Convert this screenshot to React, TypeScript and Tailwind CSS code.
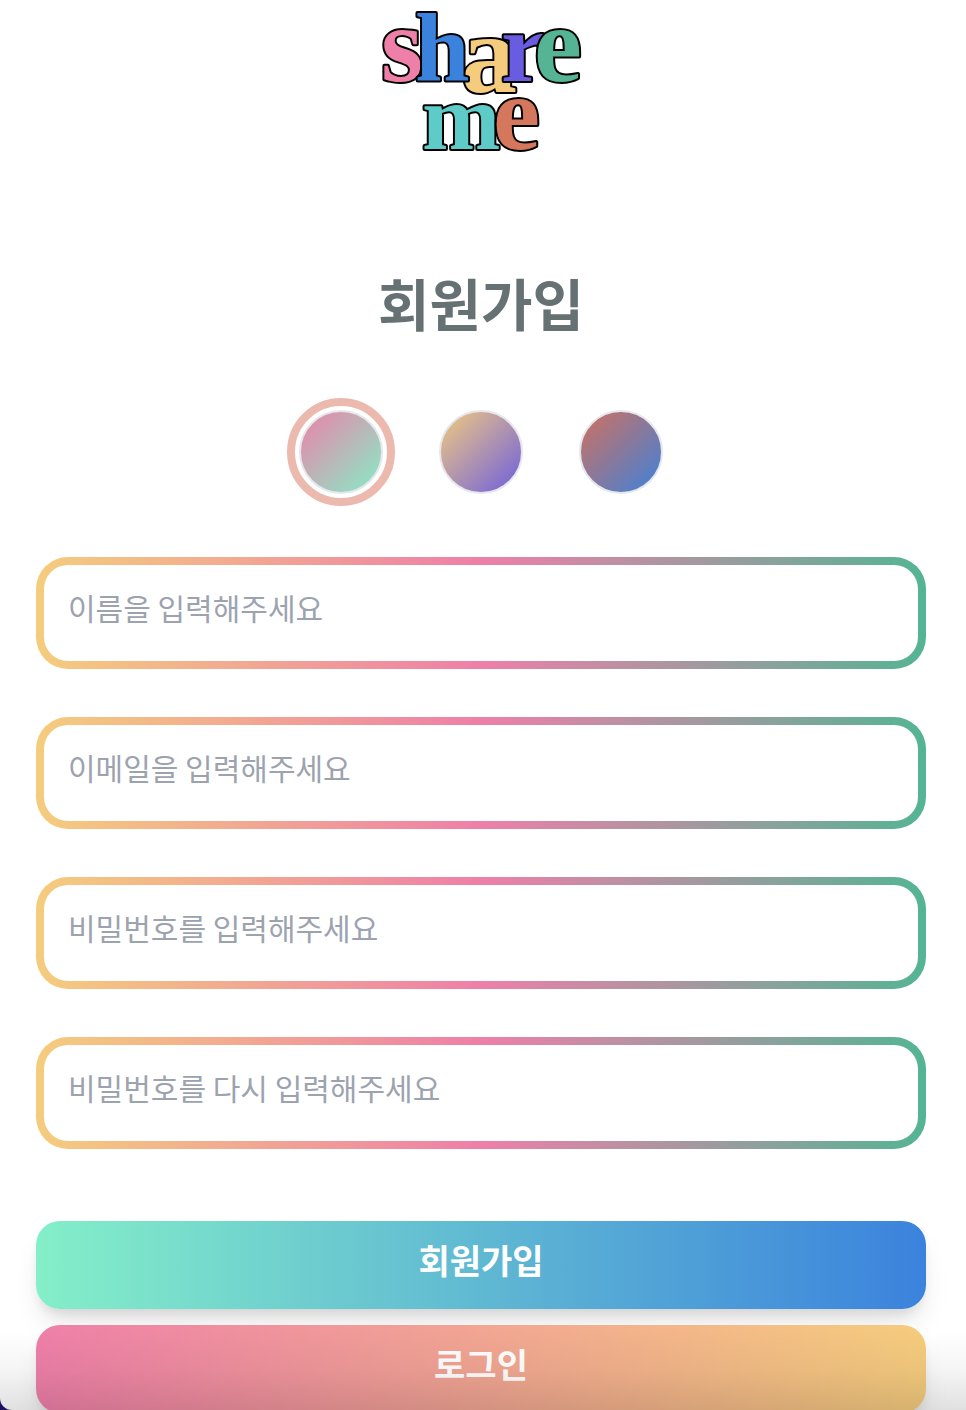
import { useState } from "react";

const letters = [
  { char: "s", x: 0, y: 69, size: 108, color: "#ee7fa8" },
  { char: "a", x: 80, y: 80, size: 112, color: "#f5cc7d" },
  { char: "h", x: 34, y: 69, size: 98, color: "#3b82dd" },
  { char: "r", x: 120, y: 69, size: 100, color: "#6a5ce0" },
  { char: "e", x: 153, y: 69, size: 108, color: "#54b494" },
  { char: "m", x: 41, y: 137, size: 94, color: "#5ecbc8" },
  { char: "e", x: 112, y: 137, size: 106, color: "#d4775c" },
];

function Logo() {
  return (
    <svg
      viewBox="0 0 200 144"
      className="block h-[144px] w-[200px] overflow-visible font-['Liberation_Serif',serif] font-bold"
      role="img"
      aria-label="share me"
    >
      {letters.map((l, i) => (
        <text
          key={i}
          x={l.x}
          y={l.y}
          fontSize={l.size}
          fill={l.color}
          stroke="black"
          strokeWidth={4}
          strokeLinejoin="round"
          paintOrder="stroke"
        >
          {l.char}
        </text>
      ))}
    </svg>
  );
}

const themes = [
  { id: "mint", label: "핑크 민트", fill: "bg-[linear-gradient(135deg,#ee7fa8,#84efc8)]" },
  { id: "violet", label: "옐로 바이올렛", fill: "bg-[linear-gradient(135deg,#f5cc7d,#6a5ce0)]" },
  { id: "blue", label: "레드 블루", fill: "bg-[linear-gradient(135deg,#d4705c,#3b82dd)]" },
];

const fields = [
  { id: "name", type: "text", hint: "이름을 입력해주세요" },
  { id: "email", type: "email", hint: "이메일을 입력해주세요" },
  { id: "password", type: "password", hint: "비밀번호를 입력해주세요" },
  { id: "confirm", type: "password", hint: "비밀번호를 다시 입력해주세요" },
];

const buttonBase =
  "h-[88px] w-full shrink-0 rounded-3xl pb-3 text-[34px] font-bold text-white shadow-[0_20px_30px_-6px_rgba(0,0,0,0.1),0_8px_12px_-4px_rgba(0,0,0,0.1)]";

export default function App() {
  const [theme, setTheme] = useState("mint");

  return (
    <div className="h-screen overflow-hidden bg-[#1e1060] font-['Noto_Sans_CJK_KR',sans-serif]">
      <main className="relative flex h-full flex-col items-center overflow-hidden rounded-bl-xl bg-white pt-3 pr-10 pl-9">
        <Logo />
        <h1 className="mt-[106px] text-[56px] leading-[80px] font-bold text-[#667173]">회원가입</h1>

        <form className="flex w-full flex-col items-center" onSubmit={(e) => e.preventDefault()}>
          <fieldset className="mt-[68px] flex gap-14">
            {themes.map((t) => (
              <input
                key={t.id}
                type="radio"
                name="theme"
                aria-label={t.label}
                checked={theme === t.id}
                onChange={() => setTheme(t.id)}
                className={`size-[84px] cursor-pointer appearance-none rounded-full border-2 border-[#e5e7eb] bg-origin-border outline-offset-4 outline-[#ebb9ae] checked:outline-8 checked:outline-solid ${t.fill}`}
              />
            ))}
          </fieldset>

          <div className="mt-[63px] flex w-full flex-col gap-12">
            {fields.map((f) => (
              <div
                key={f.id}
                className="rounded-[32px] bg-[linear-gradient(90deg,#f5cc7d,#ee7fa8_50%,#54b494)] p-2"
              >
                <input
                  id={f.id}
                  type={f.type}
                  aria-label={f.hint}
                  placeholder={f.hint}
                  className="block h-24 w-full rounded-3xl bg-white px-6 pb-3 text-[30px] text-gray-700 outline-none placeholder:text-[#9ca3af]"
                />
              </div>
            ))}
          </div>

          <div className="mt-[72px] flex w-full flex-col gap-4">
            <button type="submit" className={`${buttonBase} bg-[linear-gradient(90deg,#84efc8,#3b82dd)]`}>
              회원가입
            </button>
            <button type="button" className={`${buttonBase} bg-[linear-gradient(90deg,#ee7fa8,#f5cc7d)]`}>
              로그인
            </button>
          </div>
        </form>

        <div className="pointer-events-none absolute inset-x-0 bottom-0 h-20 bg-[linear-gradient(180deg,transparent,rgba(0,0,0,0.04)_50%,rgba(0,0,0,0.12))]" />
      </main>
    </div>
  );
}
